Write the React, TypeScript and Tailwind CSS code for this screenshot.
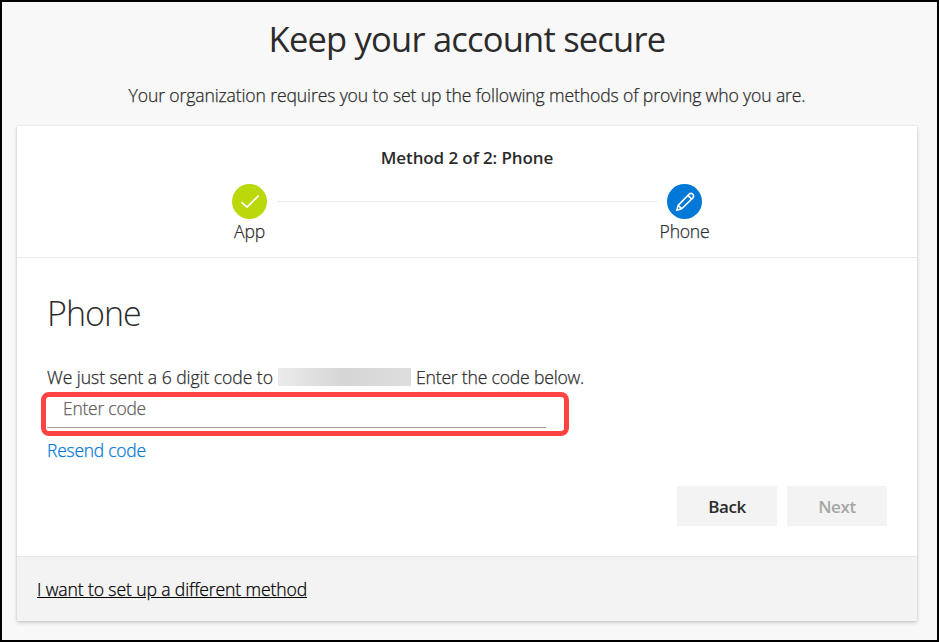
import type { ReactNode } from "react";

function Step({ label, colour, children }: { label: string; colour: string; children: ReactNode }) {
  return (
    <div className="flex w-[55px] flex-col items-center">
      <div className={`flex h-[35px] w-[35px] items-center justify-center rounded-full ${colour}`}>{children}</div>
      <span className="text-[17.6px] leading-[25px] tracking-[-0.25px] whitespace-nowrap">{label}</span>
    </div>
  );
}

export default function App() {
  return (
    <div className="flex h-[642px] w-[939px] flex-col items-center overflow-hidden border-2 border-black bg-[#f8f8f8] pr-[5px] font-['Open_Sans','Noto_Sans',sans-serif] font-light text-[#2b2b2b] [-webkit-text-stroke:0.25px]">
      <h1 className="mt-[13px] text-[34.5px] leading-[48px] font-normal tracking-[-0.79px] whitespace-nowrap [-webkit-text-stroke:0px]">Keep your account secure</h1>
      <p className="mt-[19px] text-[17.6px] leading-[26px] tracking-[-0.13px] whitespace-nowrap">Your organization requires you to set up the following methods of proving who you are.</p>

      <main className="mt-[18px] flex h-[495px] w-[900px] shrink-0 flex-col bg-white shadow-[0_2px_4px_rgba(0,0,0,0.16),0_0_2px_rgba(0,0,0,0.12)]">
        <header className="flex h-[132px] shrink-0 flex-col items-center border-b border-[#eaeaea] pt-[19px]">
          <h2 className="text-[17px] leading-[26px] font-semibold tracking-[-0.1px] whitespace-nowrap [-webkit-text-stroke:0px]">Method 2 of 2: Phone</h2>
          <div className="mt-[13px] flex">
            <Step label="App" colour="bg-[#bad80a]">
              <svg width="20" height="16" viewBox="0 0 20 16" fill="none" stroke="#fff" strokeWidth="1.7">
                <path d="M1.4 8.2 7 13.2 18.6 1.7" />
              </svg>
            </Step>
            <div className="mt-[17px] h-px w-[380px] bg-[#eaeaea]" />
            <Step label="Phone" colour="bg-[#0078d7]">
              <svg width="20" height="20" viewBox="0 0 20 20" fill="none" stroke="#fff" strokeWidth="1.6" strokeLinejoin="round">
                <path d="M1.8 18.2 3.2 13.4 14 2.2a2.4 2.4 0 0 1 3.8 3.8L6.7 16.8ZM3.2 13.4l3.5 3.4M13 3.4l3.7 3.7" />
              </svg>
            </Step>
          </div>
        </header>

        <section className="flex h-[298px] shrink-0 flex-col px-[30px] pt-[31px]">
          <h2 className="h-[48px] text-[34px] leading-[48px] tracking-[-1px] whitespace-nowrap [-webkit-text-stroke:0px]">Phone</h2>
          <div className="mt-[27px] flex h-[26px] items-center text-[17.6px] leading-[26px] whitespace-nowrap">
            <span className="w-[231px] tracking-[-0.06px]">We just sent a 6 digit code to</span>
            <span className="h-[18px] w-[133px] bg-linear-to-r from-[#ebebeb] via-[#d6d6d6] to-[#dedede]" />
            <span className="ml-[5px] tracking-[-0.2px]">Enter the code below.</span>
          </div>
          <div className="mt-[2px] -ml-[6px] h-[44px] w-[528px] rounded-[8px] border-[5px] border-[#ff4343] pl-px">
            <input placeholder="Enter code" className="block h-[31px] w-[499px] border-b border-[#a0a0a0] bg-transparent pb-[8px] pl-[16px] text-[17.4px] tracking-[-0.2px] outline-none placeholder:text-[#606060]" />
          </div>
          <a className="mt-px text-[17.4px] leading-[26px] tracking-[-0.2px] text-[#0078d7]">Resend code</a>
          <div className="mt-[23px] flex shrink-0 justify-end gap-[10px] text-[17px] font-semibold tracking-[-0.4px] [-webkit-text-stroke:0px]">
            <button className="h-[40px] w-[100px] bg-[#f3f3f3] pt-px">Back</button>
            <button className="h-[40px] w-[100px] bg-[#f3f3f3] pt-px text-[#a6a6a6]">Next</button>
          </div>
        </section>

        <footer className="flex flex-1 items-center border-t border-[#e6e6e6] bg-[#f3f3f3] px-[20px]">
          <a className="text-[17.6px] leading-[26px] tracking-[-0.13px] whitespace-nowrap text-black underline">I want to set up a different method</a>
        </footer>
      </main>
    </div>
  );
}
